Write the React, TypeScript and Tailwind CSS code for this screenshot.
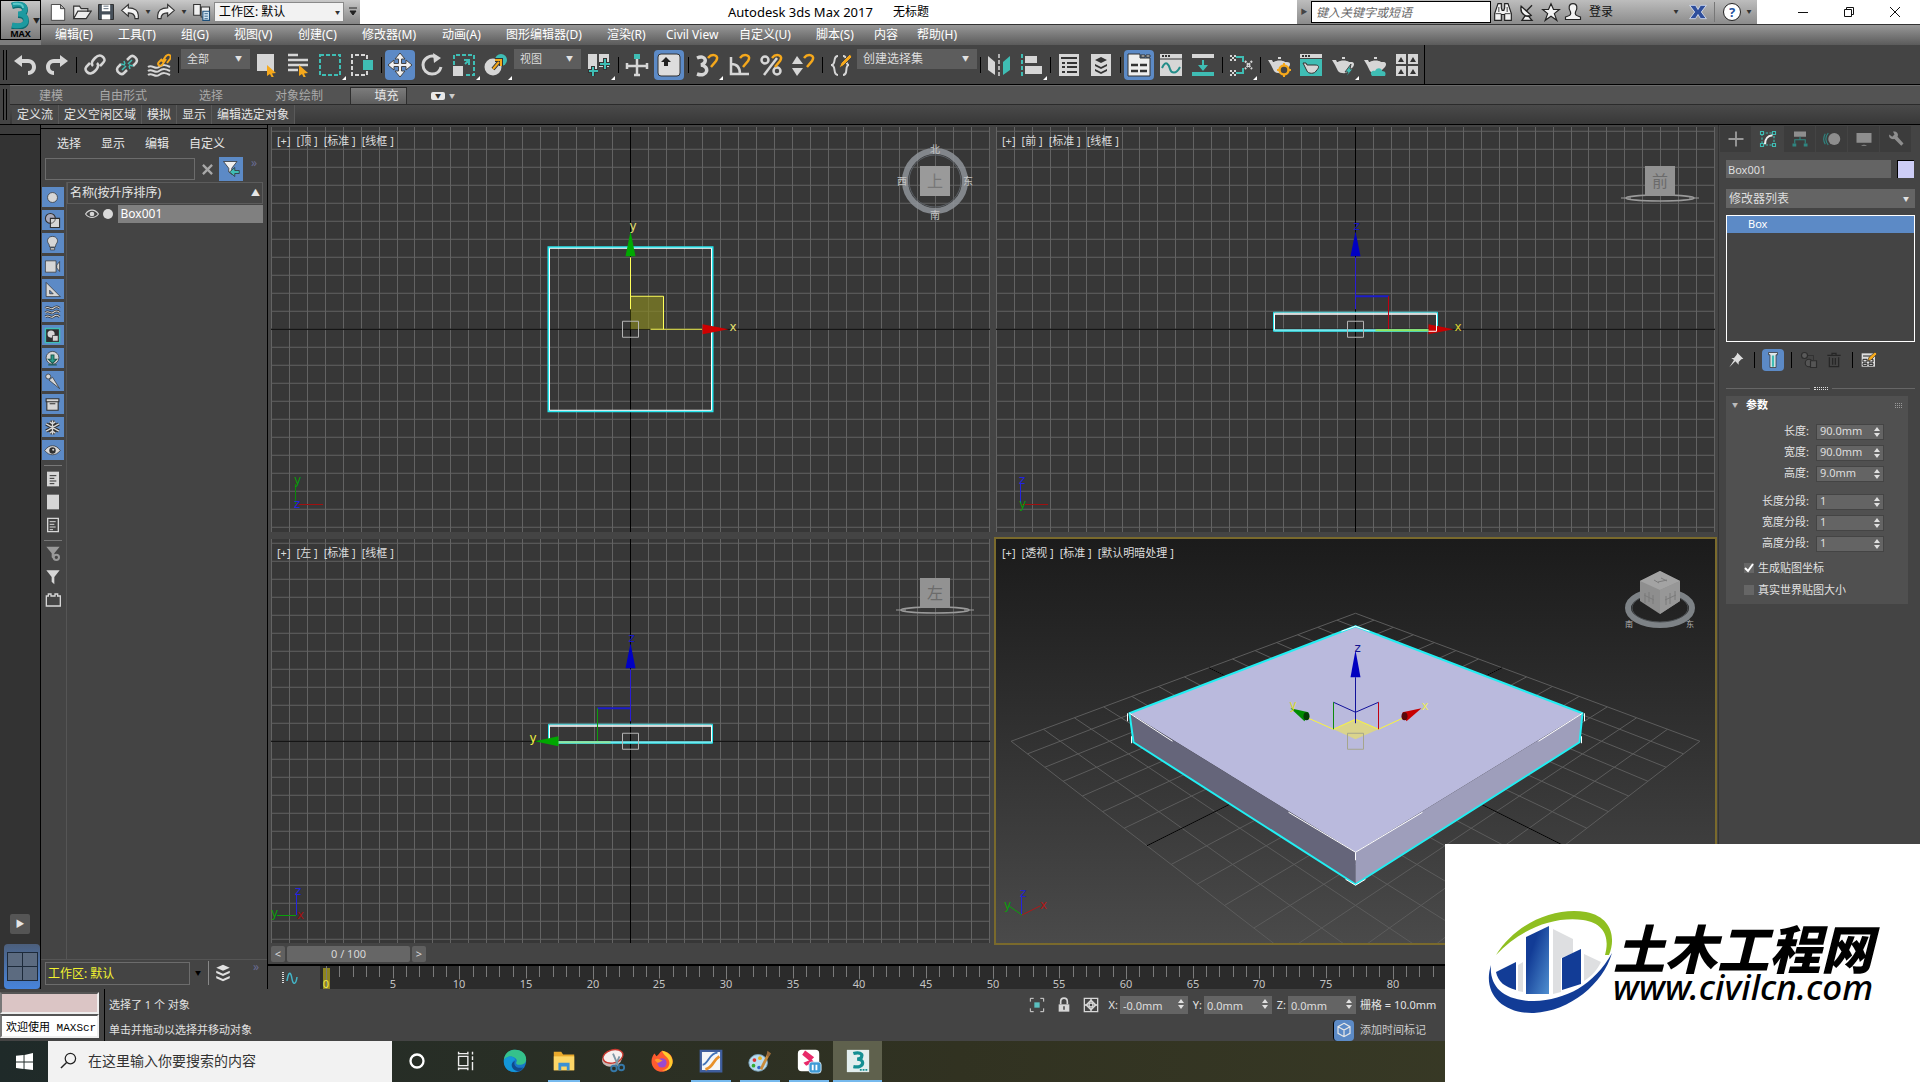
import React from 'react';
import clsx from 'clsx';

const FIELD = 'bg-[#646464] text-[#dedede] outline-none';

interface IconProps {
  children: React.ReactNode;
  className?: string;
}

function Icon({ children, className = 'w-6 h-6' }: IconProps) {
  return (
    <svg viewBox="0 0 24 24" fill="none" className={clsx('shrink-0', className)} aria-hidden="true">
      {children}
    </svg>
  );
}

const L = '#d6d6d6';
const T = '#3fbdb4';
const O = '#f5a81c';

const TEAPOT = 'M1 7h4l1 2h1c2-2 9-2 11 0h2c3 0 4 2 2 5l-4 4c-1 3-9 3-11 0L4 12zM11 6h3v-2h-3z';

/* ---------- Title bar ---------- */

const MENUS = [
  { label: '编辑(E)', width: 'w-[63px]' },
  { label: '工具(T)', width: 'w-[63px]' },
  { label: '组(G)', width: 'w-[53px]' },
  { label: '视图(V)', width: 'w-16' },
  { label: '创建(C)', width: 'w-16' },
  { label: '修改器(M)', width: 'w-20' },
  { label: '动画(A)', width: 'w-16' },
  { label: '图形编辑器(D)', width: 'w-[101px]' },
  { label: '渲染(R)', width: 'w-[59px]' },
  { label: 'Civil View', width: 'w-[73px]' },
  { label: '自定义(U)', width: 'w-[77px]' },
  { label: '脚本(S)', width: 'w-[58px]' },
  { label: '内容', width: 'w-[43px]' },
  { label: '帮助(H)', width: 'w-16' },
];

function Header() {
  return (
    <header className="flex bg-[#7d7d7d]">
      <button aria-label="应用程序" className="w-[41px] h-10 shrink-0 border border-black bg-linear-to-b from-[#c4c4c4] to-[#7c7c7c] flex flex-col items-center relative">
        <svg viewBox="0 0 24 28" className="w-6 h-7 mr-1" fill="none">
          <path d="M5 5c7-2 13-1 13 4 0 3-3 5-7 5 5 0 8 2 8 6 0 5-6 7-14 5" stroke="#0a6b70" strokeWidth="6" />
          <path d="M5 4c7-2 13-1 13 4 0 3-3 5-7 5 5 0 8 2 8 6 0 5-6 7-14 5" stroke="#1d9aa0" strokeWidth="5" />
          <path d="M6 3c6-1 10 0 10 4" stroke="#5cc8c8" strokeWidth="2" />
        </svg>
        <span className="text-[9px] leading-[9px] font-bold text-black">MAX</span>
        <span className="absolute right-0 top-4 text-[7px] leading-2 text-[#222]">▼</span>
      </button>
      <div className="flex-1 min-w-0">
        <div className="h-6 bg-white flex items-stretch">
          <div className="w-[319px] shrink-0 bg-linear-to-b from-[#c9c9c9] to-[#858585] flex items-center pl-[5px]">
            <button aria-label="新建" className="w-6 flex justify-center">
              <Icon className="w-5 h-5"><path d="M4 3h11l5 5v14H4z M15 3v5h5" fill="#fff" stroke="#333" /></Icon>
            </button>
            <button aria-label="打开" className="w-6 flex justify-center">
              <Icon className="w-5 h-5"><path d="M2 20V5h7l2 3h8v4M2 20l5-9h16l-6 9z" fill="#eee" stroke="#333" strokeWidth="1.4" /></Icon>
            </button>
            <button aria-label="保存" className="w-6 flex justify-center">
              <Icon className="w-5 h-5">
                <path d="M3 3h18v18H3z" fill="#46505a" stroke="#222" />
                <path d="M7 3h10v8H7zM7 15h10v6H7z" fill="#fff" />
                <path d="M9 5h6M9 8h6" stroke="#456" />
              </Icon>
            </button>
            <button aria-label="撤消" className="w-6 flex justify-center">
              <Icon className="w-5 h-5"><path d="M2 10l8-7v4c8 0 12 4 12 9v4h-4c0-5-3-7-8-7v4z" fill="#f4f4f4" stroke="#333" strokeWidth="1.4" /></Icon>
            </button>
            <span className="w-3 text-center text-[5px] text-[#333]">▼</span>
            <button aria-label="重做" className="w-6 flex justify-center">
              <Icon className="w-5 h-5"><path d="M22 10l-8-7v4c-8 0-12 4-12 9v4h4c0-5 3-7 8-7v4z" fill="#f4f4f4" stroke="#333" strokeWidth="1.4" /></Icon>
            </button>
            <span className="w-3 text-center text-[5px] text-[#333]">▼</span>
            <button aria-label="项目文件夹" className="w-6 flex justify-center">
              <Icon className="w-5 h-5">
                <path d="M2 3h8v13H2zM11 6h10v12H11z" fill="#f0f0f0" stroke="#333" strokeWidth="1.3" />
                <path d="M13 11h8v11h-8z" fill="#cfe3f0" stroke="#1d4f7a" strokeWidth="1.3" />
                <path d="M15 14h4M15 17h4M15 20h4" stroke="#1d4f7a" />
              </Icon>
            </button>
            <div className="relative">
              <select aria-label="工作区" className="block appearance-none w-[130px] h-5 bg-[#f2f2f2] text-black text-xs leading-4 pl-1 border border-[#8a8a8a]">
                <option>工作区: 默认</option>
              </select>
              <span className="absolute right-1 top-1.5 text-[5px] leading-2 text-[#333] pointer-events-none">▼</span>
            </div>
            <svg viewBox="0 0 10 10" className="w-2.5 h-2.5 ml-1"><path d="M1 1h8M2 4h6l-3 4z" stroke="#222" fill="#222" /></svg>
          </div>
          <h1 className="flex-1 flex items-center justify-center gap-5 text-[13px] leading-4 text-black">
            <span>Autodesk 3ds Max 2017</span>
            <span className="text-xs">无标题</span>
          </h1>
          <div className="w-[460px] shrink-0 bg-linear-to-b from-[#bdbdbd] to-[#8b8b8b] flex items-center">
            <span className="w-3.5 text-center text-[7px] text-[#444]">▶</span>
            <input aria-label="搜索帮助" placeholder="键入关键字或短语" className="w-[180px] h-[22px] bg-white border border-black px-1 text-xs italic placeholder:text-[#666]" />
            <div className="flex items-center">
              <button aria-label="搜索" className="w-6 flex justify-center">
                <Icon className="w-5 h-5"><path d="M6 2h4v5l1 3h2l1-3V2h4l4 12v8h-8v-7h-4v7H2v-8z" fill="#f3f3f3" stroke="#222" strokeWidth="1.4" /><path d="M3 14h7M14 14h7M7 6v6M17 6v6" stroke="#222" /></Icon>
              </button>
              <button aria-label="通信中心" className="w-6 flex justify-center">
                <Icon className="w-5 h-5"><path d="M5 5l12 11c-5 3-14-1-12-11zM11 11l7-7M10 16l-4 6h12l-5-6" fill="#f3f3f3" stroke="#222" strokeWidth="1.6" /></Icon>
              </button>
              <button aria-label="收藏夹" className="w-6 flex justify-center">
                <Icon className="w-5 h-5"><path d="M12 2l3 7h7l-6 5 3 8-7-5-7 5 3-8-6-5h7z" fill="#f3f3f3" stroke="#222" strokeWidth="1.4" /></Icon>
              </button>
              <button className="flex items-center text-xs text-[#111]">
                <Icon className="w-5 h-5 mr-1.5"><path d="M12 2c5 0 6 5 3 10-1 3 0 4 6 6v3H3v-3c6-2 7-3 6-6C6 7 7 2 12 2z" fill="#f3f3f3" stroke="#222" strokeWidth="1.4" /></Icon>
                登录
              </button>
            </div>
            <span className="ml-auto w-3 text-center text-[5px] text-[#333]">▼</span>
            <button aria-label="Exchange" className="w-8 flex justify-center">
              <Icon className="w-5 h-5">
                <path d="M2 4h7l3 5 3-5h7l-6 8 6 8h-7l-3-5-3 5H2l6-8z" fill="#2f4f9c" stroke="#dfe6f5" />
              </Icon>
            </button>
            <span className="w-px h-5 bg-[#777]" />
            <button aria-label="帮助" className="ml-2 w-[18px] h-[18px] rounded-full border border-[#222] bg-white text-[13px] leading-4 font-bold text-[#2453a0]">?</button>
            <span className="w-4 text-center text-[5px] text-[#333]">▼</span>
          </div>
          <div className="w-[163px] shrink-0 flex items-center justify-end pr-0.5 text-black">
            <button aria-label="最小化" className="w-[46px] flex justify-center"><svg viewBox="0 0 12 12" className="w-3 h-3"><path d="M1 6.5h10" stroke="#111" /></svg></button>
            <button aria-label="还原" className="w-[46px] flex justify-center"><svg viewBox="0 0 12 12" className="w-3 h-3" fill="none"><path d="M1.5 3.5h7v7h-7zM3.5 3V1.5h7v7H9" stroke="#111" /></svg></button>
            <button aria-label="关闭" className="w-[46px] flex justify-center"><svg viewBox="0 0 12 12" className="w-3 h-3"><path d="M1 1l10 10M11 1L1 11" stroke="#111" /></svg></button>
          </div>
        </div>
        <nav className="h-[21px] border-t border-[#333] bg-linear-to-b from-[#989898] to-[#5b5b5b] flex items-center pl-3.5 text-xs leading-5 text-white">
          {MENUS.map((m) => (
            <button key={m.label} className={clsx('text-left whitespace-nowrap', m.width)}>{m.label}</button>
          ))}
        </nav>
      </div>
    </header>
  );
}

/* ---------- Main toolbar ---------- */

interface ToolProps {
  label: string;
  active?: boolean;
  flyout?: boolean;
  children: React.ReactNode;
}

function Tool({ label, active, flyout, children }: ToolProps) {
  return (
    <button aria-label={label} className="w-8 h-[38px] shrink-0 flex items-center justify-center relative">
      <span className={clsx('w-[30px] h-[30px] rounded-sm flex items-center justify-center', active && 'bg-[#5c8ac6]')}>
        <Icon>{children}</Icon>
      </span>
      {flyout && (
        <svg viewBox="0 0 4 4" className="absolute right-0 bottom-1 w-1 h-1"><path d="M4 0v4H0z" fill="#fff" /></svg>
      )}
    </button>
  );
}

function Sep() {
  return (
    <span className="w-1.5 shrink-0 flex justify-center"><span className="w-px h-4 bg-black" /></span>
  );
}

function ToolSelect({ label, value, className }: { label: string; value: string; className: string }) {
  return (
    <span className={clsx('relative self-start mt-1 h-5 shrink-0', className)}>
      <select aria-label={label} className="block appearance-none w-full h-5 pl-1.5 leading-5 bg-[#5d5d5d] text-[#dcdcdc]">
        <option>{value}</option>
      </select>
      <span className="absolute right-2 top-1.5 text-[7px] leading-2 text-[#e2e2e2] pointer-events-none">▼</span>
    </span>
  );
}

const CURSOR = <path d="M13 12l9 8-4 .5 2 4-2 .5-2-4-3 2z" fill={O} />;
const MAGNET = <path d="M13 5c4-5 12-3 8 3l-5 6" stroke={O} strokeWidth="2.5" />;

function Toolbar() {
  return (
    <div className="h-10 bg-[#444] border-b border-black flex">
      <div className="flex items-center border-r border-black pr-px">
        <span className="w-[9px] h-[30px] flex gap-0.5 pl-[3px]"><i className="w-px bg-black" /><i className="w-px bg-black" /></span>
        <Tool label="撤消"><path d="M9 2L1 8l8 6v-4h6c3 0 4 2 4 4s-1 4-4 4v4c5 0 8-4 8-8s-3-8-8-8H9z" fill={L} /></Tool>
        <Tool label="重做"><path d="M15 2l8 6-8 6v-4H9c-3 0-4 2-4 4s1 4 4 4v4c-5 0-8-4-8-8s3-8 8-8h6z" fill={L} /></Tool>
        <Sep />
        <Tool label="链接"><path d="M10 13c-3-3 0-6 2-8s5-4 8-1 1 5-1 7l-2 2M14 10c3 3 0 6-2 8s-5 4-8 1-1-5 1-7l2-2" stroke={L} strokeWidth="2.5" /></Tool>
        <Tool label="取消链接">
          <path d="M12 7l3-3c3-3 9 2 6 6l-3 3M12 17l-3 3c-3 3-9-2-6-6l3-3" stroke={L} strokeWidth="2.5" />
          <path d="M17 7L13 11M11 13L7 17M9 8l1 3M6 11l4 1M15 16l-1-3M18 13l-4-1" stroke={T} strokeWidth="1.5" />
        </Tool>
        <Tool label="绑定到空间扭曲">
          <path d="M1 14c4-3 7 3 11 0s7-2 11 0M1 18c4-3 7 3 11 0s7-2 11 0M1 22c4-3 7 3 11 0s7-2 11 0" stroke={L} strokeWidth="2" />
          <path d="M15 9l4-6c3-3 6 0 4 3l-3 4M19 6l-4 6c-3 2-5-1-3-3l3-3" stroke={O} strokeWidth="2" />
        </Tool>
        <Sep />
        <ToolSelect label="选择过滤器" value="全部" className="w-[69px] text-[11px]" />
        <Tool label="选择对象"><path d="M3 1h17v17H3z" fill={L} />{CURSOR}</Tool>
        <Tool label="按名称选择"><path d="M2 2h10M2 7h20M2 12h20M2 17h10" stroke={L} strokeWidth="2.5" />{CURSOR}</Tool>
        <Tool label="矩形选择区域" flyout><path d="M2 2h20v20H2z" stroke={T} strokeWidth="2" strokeDasharray="4 2" /></Tool>
        <Tool label="窗口/交叉"><path d="M17 6V2H2v20h15v-4" stroke={L} strokeWidth="2" strokeDasharray="4 2" /><path d="M13 7h10v10H13z" fill={T} /></Tool>
        <Sep />
        <Tool label="选择并移动" active>
          <path d="M12 0l5 6h-3.500v4.500H18V7l6 5-6 5v-3.500h-4.500V18H17l-5 6-5-6h3.500v-4.500H6V17l-6-5 6-5v3.500h4.500V6H7z" fill="#f0f0f0" stroke="#444" />
        </Tool>
        <Tool label="选择并旋转"><path d="M16 4c-6-3-13 2-13 8 0 5 4 9 9 9s8-3 9-7" stroke={L} strokeWidth="3" /><path d="M13 0l8 5-7 5z" fill={L} /></Tool>
        <Tool label="选择并缩放" flyout>
          <path d="M2 12V2h20v20H13" stroke={T} strokeWidth="2" strokeDasharray="4 2" />
          <path d="M1 13h10v10H1z" fill={L} /><path d="M13 11l4-4M12 7h5v5" stroke={T} strokeWidth="2" />
        </Tool>
        <Tool label="选择并放置" flyout>
          <circle cx="17" cy="7" r="6" fill={T} /><circle cx="9" cy="14" r="8.500" fill={L} />
          <path d="M9 16l6-7M11 7h6v6" stroke="#333" strokeWidth="4" /><path d="M9 16l6-7M11 7h6v6" stroke={O} strokeWidth="2" />
        </Tool>
        <ToolSelect label="参考坐标系" value="视图" className="w-[67px] mx-0.5 text-[11px]" />
        <Tool label="使用轴点中心" flyout>
          <path d="M1 1h9v17H1zM12 1h10v13H12z" fill={L} /><path d="M6 13v10M1 18h10M18 5v12M12 11h11" stroke="#333" strokeWidth="4" /><path d="M6 14v9M2 18h9M18 6v10M13 11h10" stroke={T} strokeWidth="2" />
        </Tool>
        <Sep />
        <Tool label="选择并操纵"><path d="M12 5v18M1 13h22M2 10v6M22 10v6M9 22h6" stroke={L} strokeWidth="2.500" /><path d="M9 1h6v5H9z" fill={T} /></Tool>
        <Tool label="键盘快捷键覆盖" active><rect x="1" y="1" width="22" height="22" rx="3" fill="#ddd" stroke="#333" /><path d="M9 4l5 5h-3v4H7V9H4z" fill="#222" /></Tool>
        <Sep />
        <Tool label="捕捉开关" flyout>
          <path d="M2 5c9-4 11 5 4 7 9 1 7 13-4 9" stroke={L} strokeWidth="3.5" />{MAGNET}
        </Tool>
        <Tool label="角度捕捉切换"><path d="M4 4v17h18M4 11c6 0 9 4 9 10" stroke={L} strokeWidth="2.5" />{MAGNET}</Tool>
        <Tool label="百分比捕捉切换">
          <circle cx="6" cy="7" r="3.5" stroke={L} strokeWidth="2.5" /><circle cx="18" cy="18" r="3.5" stroke={L} strokeWidth="2.5" /><path d="M18 5L5 22" stroke={L} strokeWidth="2.5" />{MAGNET}
        </Tool>
        <Tool label="微调器捕捉切换"><path d="M1 11l5-8 6 8zM1 15h11l-6 8z" fill={L} />{MAGNET}</Tool>
        <Sep />
        <Tool label="编辑命名选择集"><path d="M9 3C3 3 8 12 2 12c6 0 1 10 7 10M14 3c6 0 1 9 6 9-5 0 0 10-6 10" stroke={L} strokeWidth="2" /><path d="M10 15l2-5 9-9 2 3-9 9z" fill={O} stroke="#444" /></Tool>
        <ToolSelect label="命名选择集" value="创建选择集" className="w-[120px] text-xs" />
        <Sep />
        <Tool label="镜像"><path d="M1 3l7 6v13l-7-5z" fill={L} /><path d="M12 1v22" stroke={L} strokeWidth="1.5" strokeDasharray="4 2" /><path d="M23 3l-7 6v13l7-5z" fill={T} /></Tool>
        <Tool label="对齐" flyout><path d="M3 1v22" stroke={T} strokeWidth="2" strokeDasharray="4 2" /><path d="M6 3h12v7H6zM6 13h17v8H6z" fill={L} /></Tool>
        <Sep />
        <Tool label="场景资源管理器"><path d="M2 1h20v22H2z" fill={L} /><path d="M4 5h16M5 10h3M10 10h10M5 14h3M10 14h10M5 19h3M10 19h10" stroke="#333" strokeWidth="2" /></Tool>
        <Tool label="层资源管理器"><path d="M2 1h20v22H2z" fill={L} /><path d="M12 4l6 3-6 3-6-3zM6 11l6 3 6-3v2l-6 3-6-3zM6 16l6 3 6-3v2l-6 3-6-3z" fill="#333" /></Tool>
        <Sep />
        <Tool label="显示功能区" active><path d="M1 1h12v4h10v18H1z" fill="#eee" stroke="#333" /><path d="M14 2h4v2h-4zM19 2h4v2h-4z" fill="#eee" stroke="#333" /><path d="M4 12h7M13 12h7M4 18h7M13 18h7" stroke="#333" strokeWidth="2.5" /></Tool>
        <Tool label="曲线编辑器"><path d="M1 1h22v22H1z" fill={L} /><path d="M1 6h22" stroke="#333" /><path d="M3 3h8" stroke="#333" strokeWidth="2" strokeDasharray="2 1" /><path d="M3 15c4-9 7-3 8 1s6 6 10-2" stroke="#228c88" strokeWidth="2" /></Tool>
        <Tool label="图解视图"><path d="M1 1h22v4H1z" fill={L} /><path d="M1 19h22v4H1z" fill={T} /><path d="M11 7h2v5h4l-5 6-5-6h4z" fill={T} /></Tool>
        <Sep />
        <Tool label="材质编辑器" flyout>
          <path d="M7 4h7v5M7 20h7v-5" stroke={T} strokeWidth="2" />
          <path d="M1 2h2v2H1zM5 2h2v2H5zM3 4h2v2H3zM1 6h2v2H1zM5 6h2v2H5zM1 17h2v2H1zM5 17h2v2H5zM3 19h2v2H3zM1 21h2v2H1zM5 21h2v2H5z" fill={L} />
          <path d="M16 8l7 8M23 8l-7 8" stroke={L} strokeWidth="2" strokeDasharray="2 1" />
        </Tool>
        <Sep />
        <Tool label="渲染设置"><path d={TEAPOT} fill={L} /><circle cx="17" cy="17" r="4.5" stroke={O} strokeWidth="2.5" fill="#444" /><path d="M17 10v3M17 21v3M10 17h3M21 17h3" stroke={O} strokeWidth="2" /></Tool>
        <Tool label="渲染帧窗口"><path d="M1 1h22v4H1z" fill={L} /><path d="M1 6h22v17H1z" fill={T} /><path d="M4 10h3l1 2h8c4 0 5 2 1 6-1 3-8 3-9 0z" fill={L} stroke="#333" /><path d="M3 3h9" stroke="#333" strokeWidth="2" strokeDasharray="2 1" /></Tool>
        <Tool label="渲染产品" flyout><path d={TEAPOT} fill={L} /><path d="M20 11l-6 8h3l-2 5 7-8h-3z" fill={T} stroke="#444" /></Tool>
        <Tool label="在云中渲染"><path d={TEAPOT} fill={L} /><path d="M9 23c-3-4 1-6 3-5 2-4 7-3 7 0 4 0 4 3 3 5z" fill={T} /></Tool>
        <Tool label="渲染库"><path d="M1 1h10v10H1zM13 1h10v10H13zM1 13h10v10H1zM13 13h10v10H13z" fill={L} /><path d="M3 9l3-5 3 5zM15 9l3-5 3 5zM3 21l3-5 3 5zM15 21l3-5 3 5z" fill="#333" /></Tool>
      </div>
    </div>
  );
}

/* ---------- Ribbon ---------- */

const PANELS = ['定义流', '定义空闲区域', '模拟', '显示', '编辑选定对象'];

function Ribbon() {
  return (
    <div className="flex bg-[#444] text-xs">
      <span className="w-2.5 shrink-0 flex gap-0.5 pl-[3px] py-1"><i className="w-px bg-black" /><i className="w-px bg-black" /></span>
      <div className="flex-1">
        <div className="h-[19px] bg-[#535353] border-t border-[#6a6a6a] flex items-end text-[#a9a9a9] leading-4">
          <button className="w-[82px]">建模</button>
          <button className="w-[62px]">自由形式</button>
          <button className="w-[114px]">选择</button>
          <button className="w-[62px]">对象绘制</button>
          <button className="ml-5 w-[57px] h-[17px] pl-4 border border-b-0 border-[#2d2d2d] bg-linear-to-b from-[#7c7c7c] to-[#5e5e5e] text-[#e6e6e6]">填充</button>
          <button aria-label="功能区选项" className="ml-6 mb-1 flex items-center gap-1 text-[6px] leading-2 text-[#ccc]">
            <span className="w-3.5 h-2 rounded-xs bg-[#e8e8e8] text-[#333]">▼</span>▼
          </button>
        </div>
        <div className="h-5 border-t border-[#2b2b2b] bg-linear-to-b from-[#4a4a4a] to-[#383838] flex pl-0.5 text-[#e4e4e4] leading-[18px]">
          {PANELS.map((p) => (
            <button key={p} className="px-[5px] border-r border-[#5a5a5a] bg-[#484848] whitespace-nowrap">{p}</button>
          ))}
        </div>
      </div>
    </div>
  );
}

/* ---------- Scene explorer ---------- */

const D = '#2f2f2f';

const FILTERS = [
  { name: '几何体', icon: <circle cx="12" cy="12" r="7" fill={L} stroke={D} /> },
  { name: '图形', icon: <><circle cx="9" cy="9" r="7" fill="#aab" stroke={D} strokeWidth="1.5" /><path d="M9 9h13v13H9z" fill={L} stroke={D} strokeWidth="1.5" /><path d="M9 16c4 0 7-3 7-7" stroke={D} /></> },
  { name: '灯光', icon: <path d="M12 2c7 0 9 7 5 11l-1 4H8l-1-4C3 9 5 2 12 2zM9 18h6v3H9z" fill={L} stroke={D} /> },
  { name: '摄影机', icon: <path d="M2 4h15v16H2zM18 10l4-5v14l-4-5z" fill={L} stroke={D} /> },
  { name: '辅助对象', icon: <><path d="M3 2l20 20H3z" fill={L} stroke={D} /><path d="M8 13l5 5H8z" fill="#5c8ac6" stroke={D} /></> },
  { name: '空间扭曲', icon: <><path d="M2 6c5-4 7 3 11 0s6-3 9 0M2 12c5-4 7 3 11 0s6-3 9 0M2 18c5-4 7 3 11 0s6-3 9 0" stroke={D} strokeWidth="3.5" /><path d="M2 6c5-4 7 3 11 0s6-3 9 0M2 12c5-4 7 3 11 0s6-3 9 0M2 18c5-4 7 3 11 0s6-3 9 0" stroke={L} strokeWidth="1.5" /></> },
  { name: '组', icon: <><path d="M2 2h20v20H2z" fill={D} stroke={T} strokeWidth="2" /><circle cx="10" cy="10" r="5" fill={L} /><path d="M12 12h8v8h-8z" fill={L} stroke={D} /></> },
  { name: '外部参照', icon: <><circle cx="12" cy="11" r="9" fill={L} stroke={D} /><path d="M10 7h4v6h4l-6 6-6-6h4zM6 21h12" fill="#2a9c8c" stroke="#1d5a50" strokeWidth="1.5" /></> },
  { name: '骨骼', icon: <><circle cx="6" cy="5" r="3.5" fill={L} stroke={D} /><path d="M7 10l5-4 10 16z" fill={L} stroke={D} /></> },
  { name: '容器', icon: <path d="M3 4h18v4H3zM4 8h16v12H4zM8 11h8" fill={L} stroke={D} strokeWidth="1.5" /> },
  { name: '冻结', icon: <><path d="M12 2v20M3 7l18 10M21 7L3 17M8 4l4 3 4-3M8 20l4-3 4 3" stroke={D} strokeWidth="5" /><path d="M12 2v20M3 7l18 10M21 7L3 17M8 4l4 3 4-3M8 20l4-3 4 3" stroke={L} strokeWidth="2" /></> },
  { name: '隐藏', icon: <><path d="M1 12c6-9 16-9 22 0-6 8-16 8-22 0z" fill={L} stroke={D} /><circle cx="12" cy="12" r="4.5" fill={D} /><circle cx="13" cy="11" r="1.5" fill={L} /></> },
];

function SceneExplorer() {
  return (
    <aside className="w-[228px] shrink-0 bg-[#444] border-x border-black flex flex-col text-[#e6e6e6] text-xs">
      <div className="h-1 border-b border-black" />
      <div className="h-[27px] pt-0.5 flex items-center gap-5 pl-4 text-xs">
        <button>选择</button><button>显示</button><button>编辑</button><button>自定义</button>
      </div>
      <div className="h-[26px] flex items-center pl-1">
        <input aria-label="查找" className="w-[150px] h-[22px] border border-[#6c6c6c] bg-transparent" />
        <button aria-label="清除" className="w-6 flex justify-center">
          <svg viewBox="0 0 12 12" className="w-[11px] h-[11px]"><path d="M1 1l10 10M11 1L1 11" stroke="#a8a8a8" strokeWidth="2.500" /></svg>
        </button>
        <button aria-label="选择过滤器" className="w-6 h-6 bg-[#5c8ac6] flex items-center justify-center">
          <Icon className="w-[18px] h-[18px]"><path d="M2 2h18l-7 9v8l-4-3v-5z" fill="#f0f0f0" stroke={D} /><path d="M23 14h-6v-4l-7 6 7 6v-4h6z" fill={T} stroke={D} /></Icon>
        </button>
        <span className="ml-2 mb-3 text-[#686b92]">»</span>
      </div>
      <div className="flex-1 min-h-0 flex">
        <div className="w-[25px] pt-[5px] pr-0.5 shrink-0 flex flex-col items-center">
          <div className="flex flex-col gap-[3px]">
            {FILTERS.map((f) => (
              <button key={f.name} aria-label={f.name} className="w-[22px] h-5 bg-[#5c8ac6] flex items-center justify-center">
                <Icon className="w-[17px] h-[17px]">{f.icon}</Icon>
              </button>
            ))}
          </div>
          <hr className="w-[18px] mt-[5px] mb-[3px] border-[#777]" />
          <div className="flex flex-col gap-[3px]">
            <button aria-label="全部显示" className="h-5 flex items-center"><Icon className="w-4 h-4"><path d="M3 1h18v22H3z" fill={L} /><path d="M7 7h10M7 11h7M7 15h10M7 19h7" stroke={D} strokeWidth="1.5" /></Icon></button>
            <button aria-label="不显示" className="h-5 flex items-center"><Icon className="w-4 h-4"><path d="M3 1h18v22H3z" fill={L} /></Icon></button>
            <button aria-label="反转显示" className="h-5 flex items-center"><Icon className="w-4 h-4"><path d="M4 2h16v20H4z" stroke={L} strokeWidth="2" /><path d="M7 7h9M7 11h7M7 15h9M7 19h5" stroke={L} strokeWidth="1.5" /></Icon></button>
          </div>
          <hr className="w-[18px] mt-[5px] mb-[3px] border-[#777]" />
          <div className="flex flex-col gap-[3px]">
            <button aria-label="过滤器设置" className="h-5 flex items-center"><Icon className="w-4 h-4"><path d="M2 1h20l-8 10v10l-4-4v-6z" fill="#999" /><circle cx="17" cy="17" r="4" stroke="#999" strokeWidth="3" fill="#444" /></Icon></button>
            <button aria-label="过滤器" className="h-5 flex items-center"><Icon className="w-4 h-4"><path d="M2 2h20l-8 10v11l-4-4v-7z" fill={L} /></Icon></button>
            <button aria-label="构件" className="h-5 flex items-center"><Icon className="w-4 h-4"><path d="M2 6h3V3h4v3h6V3h4v3h4v15H2z" stroke={L} strokeWidth="2" /></Icon></button>
          </div>
        </div>
        <div className="flex-1 border-l border-[#555] pr-1">
          <table className="w-full border-collapse">
            <thead>
              <tr className="h-[21px] border border-[#5c5c5c]">
                <th className="pl-0.5 text-left font-normal" colSpan={2}>
                  <div className="flex justify-between items-center pr-0.5"><span>名称(按升序排序)</span><span className="text-[9px]">▲</span></div>
                </th>
              </tr>
            </thead>
            <tbody>
              <tr className="h-5">
                <td className="w-[50px] p-0">
                  <div className="flex items-center justify-end gap-1 pr-[5px]">
                    <Icon className="w-3.5 h-3.5"><path d="M1 12c6-9 16-9 22 0-6 8-16 8-22 0z" stroke={L} strokeWidth="2" /><circle cx="12" cy="12" r="4" fill={L} /></Icon>
                    <span className="w-2.5 h-2.5 rounded-full bg-[#d9d9d9]" />
                  </div>
                </td>
                <td className="p-0"><div className="h-[18px] pl-[3px] leading-[18px] bg-[#808080] text-white">Box001</div></td>
              </tr>
            </tbody>
          </table>
        </div>
      </div>
      <div className="h-[30px] pb-[3px] border-t border-[#555] flex items-center pl-1">
        <input aria-label="工作区" defaultValue="工作区: 默认" className="w-[145px] h-[23px] px-0.5 border border-[#6c6c6c] bg-transparent text-[#f2f230]" />
        <span className="w-4 text-center text-[6px] text-black">▼</span>
        <span className="w-px h-6 bg-[#888] ml-0.5" />
        <button aria-label="图层" className="w-7 flex justify-center">
          <Icon className="w-[18px] h-[18px]"><path d="M12 1l9 4-9 4-9-4zM3 9l9 4 9-4v3l-9 4-9-4zM3 16l9 4 9-4v3l-9 4-9-4z" fill="#e2e2e2" /></Icon>
        </button>
        <span className="ml-auto pr-2 mb-3 text-[#686b92]">»</span>
      </div>
    </aside>
  );
}

/* ---------- Viewports ---------- */

const STEPS = Array.from({ length: 61 }, (_, i) => i - 30);

function Grid() {
  return (
    <g stroke="#636363">
      {STEPS.map((i) => {
        const p = Math.round(i * 17.96);
        return <path key={i} d={`M${p} -540V540M-540 ${p}H540`} />;
      })}
      <path d="M0 -900V900M-900 0H900" stroke="#000" />
    </g>
  );
}

function AxisText({ x, y, fill, children }: { x: number; y: number; fill: string; children: string }) {
  return <text x={x} y={y} fill={fill} stroke="none" fontSize="12" className="font-['DejaVu_Sans']">{children}</text>;
}

function ViewCube({ face }: { face: 'top' | 'flat' | 'iso' }) {
  return (
    <svg viewBox="-44 -44 88 88" className="absolute right-[11px] top-2.5 w-[88px] h-[88px]" fill="none">
      {face === 'top' && (
        <>
          <circle r="30" stroke="#8f949a" strokeWidth="6" opacity="0.85" />
          <circle r="26" stroke="#5b6066" />
          <path d="M-15 -15h30v30h-30z" fill="#9a9a9a" />
          <g className="font-['Noto_Sans_CJK_SC']" fill="#c4c4c4" fontSize="10" textAnchor="middle">
            <text y="-28">北</text><text y="38">南</text><text x="-33" y="4">西</text><text x="33" y="4">东</text>
            <text y="6" fill="#777" fontSize="16">上</text>
          </g>
        </>
      )}
      {face === 'flat' && (
        <>
          <ellipse cy="17" rx="34" ry="3" stroke="#9a9a9a" strokeWidth="1.500" />
          <path d="M-15 -15h30v30h-30z" fill="#929292" />
          <path d="M-39 17h10M29 17h10" stroke="#9a9a9a" />
        </>
      )}
      {face === 'iso' && (
        <>
          <ellipse cy="15" rx="32" ry="17" stroke="#7d8286" strokeWidth="6" />
          <ellipse cy="15" rx="28" ry="14" stroke="#4b4f52" />
          <path d="M0 -22L20 -12V8L0 21L-20 8V-12z" fill="#8e8e8e" />
          <path d="M0 -22L20 -12L0 -3L-20 -12z" fill="#a3a3a3" />
          <path d="M0 -3V21L20 8V-12z" fill="#979797" />
          <path d="M-15 0v10M-11 -1v10M-7 2v9M-16 2l10 5M6 3v9M10 0v11M15 -2v9M5 7l11-5M-6 -13l5 3M1 -15l6 3M-2 -11l9-2" stroke="#7b7b7b" />
          <g className="font-['Noto_Sans_CJK_SC']" fill="#b5b5b5" fontSize="8"><text x="-35" y="34">南</text><text x="26" y="34">东</text></g>
        </>
      )}
    </svg>
  );
}

interface ViewportProps {
  labels: string[];
  face: 'top' | 'flat' | 'iso';
  cubeText?: string;
  active?: boolean;
  tripod: React.ReactNode;
  children: React.ReactNode;
}

function Viewport({ labels, face, cubeText, active, tripod, children }: ViewportProps) {
  return (
    <section
      className={clsx(
        'relative overflow-hidden min-w-0 min-h-0',
        active ? 'bg-linear-to-b from-[#1b1b1b] to-[#4a4a4a] outline-2 outline-[#7a6a2c]' : 'bg-[#373737]',
      )}
    >
      <svg className="w-full h-full block" fill="none">
        <svg x="50%" y="50%" className="overflow-visible">{children}</svg>
      </svg>
      <div className="absolute left-1.5 top-1.5 flex gap-1.5 text-[11px] leading-4 text-[#dcdcdc] whitespace-pre">
        {labels.map((l) => (
          <button key={l}>{l}</button>
        ))}
      </div>
      <ViewCube face={face} />
      {cubeText && <span className="absolute right-[45px] top-11 w-5 text-center text-[16px] leading-5 text-[#6b6b6b]">{cubeText}</span>}
      <svg viewBox="-26 -32 60 44" className="absolute left-0 bottom-4 w-[60px] h-11" fill="none">{tripod}</svg>
    </section>
  );
}

function Pivot() {
  return <path d="M-8 -8h16v16h-16z" stroke="#b4b4b4" />;
}

function TopView() {
  return (
    <>
      <Grid />
      <path d="M-82 -82h164v164h-164z" stroke="#27e6ee" strokeWidth="2" />
      <path d="M-81 -81h162v162h-162z" stroke="#fff" />
      <path d="M0 -33h33v33h-33z" fill="#8a8a20" fillOpacity="0.65" />
      <path d="M0 -20V-72M0 -33H33V0M20 0H72" stroke="#ffff5a" />
      <path d="M0 -98L5 -73H-5z" fill="#00a800" />
      <path d="M98 0L72 5V-5z" fill="#d00000" />
      <Pivot />
      <AxisText x={-1} y={-99} fill="#e6e070">y</AxisText>
      <AxisText x={99} y={2} fill="#e6e070">x</AxisText>
    </>
  );
}

function FlatBox() {
  return (
    <>
      <path d="M-82 -17h164v19h-164z" stroke="#27e6ee" />
      <path d="M-81 -16h162v17h-162z" stroke="#fff" />
      <path d="M-81 -15h162" stroke="#fff" />
      <path d="M-81 1h162" stroke="#6feaf0" strokeWidth="2" />
    </>
  );
}

function UpArrow() {
  return (
    <>
      <path d="M0 -20V-72" stroke="#2a1cd8" />
      <path d="M0 -98L5 -73H-5z" fill="#0000c4" />
      <AxisText x={-2} y={-99} fill="#1818c8">z</AxisText>
    </>
  );
}

function FrontView() {
  return (
    <>
      <Grid />
      <FlatBox />
      <path d="M0 -33H33" stroke="#1c1cc8" strokeWidth="2" />
      <path d="M33 -33V0" stroke="#c00010" />
      <path d="M20 1H73" stroke="#8fe860" strokeWidth="2" />
      <path d="M98 0L73 5V-5z" fill="#c80000" />
      <path d="M81 -5V2H73" stroke="#fff" />
      <UpArrow />
      <Pivot />
      <AxisText x={99} y={2} fill="#d8d030">x</AxisText>
    </>
  );
}

function LeftView() {
  return (
    <>
      <Grid />
      <FlatBox />
      <path d="M0 -33H-33" stroke="#1c1cc8" strokeWidth="2" />
      <path d="M-33 -33V0" stroke="#0c9a0c" />
      <path d="M-20 1H-73" stroke="#8fe8a0" strokeWidth="2" />
      <path d="M-96 0L-72 5V-5z" fill="#00a800" />
      <UpArrow />
      <Pivot />
      <AxisText x={-101} y={1} fill="#f0f040">y</AxisText>
    </>
  );
}

// ground plane to screen, u runs to the lower right and v to the lower left
function project(u: number, v: number) {
  const q = u + v;
  const k = 1 - 0.0249 * q;
  return `${((24.6 * (u - v)) / k).toFixed(1)} ${((12.33 * q) / k).toFixed(1)}`;
}

const GROUND = Array.from({ length: 15 }, (_, i) => i - 7);

function PerspectiveView() {
  return (
    <>
      <g stroke="#5c5c5c">
        {GROUND.map((i) => (
          <path key={i} d={`M${project(i, -7)}L${project(i, 7)}M${project(-7, i)}L${project(7, i)}`} />
        ))}
        <path d={`M${project(0, -7)}L${project(0, 7)}M${project(-7, 0)}L${project(7, 0)}`} stroke="#000" />
      </g>
      <path d="M0 -115L227 -28L0 111L-226 -28z" fill="#babadd" />
      <path d="M-226 -28L0 111V143L-222 1z" fill="#65657a" />
      <path d="M227 -28L0 111V143L224 1z" fill="#9e9ebb" />
      <path d="M0 -115L227 -28L224 1L0 143L-222 1L-226 -28z" stroke="#22eef2" strokeWidth="2" strokeLinejoin="round" />
      <path d="M-226 -28L-183 0M-67 71L0 111L67 71M0 111V119M227 -28L183 0M-14 -110L0 -115L14 -110M-228 -20V-28M229 -20V-28M-224 -5V2M226 -5V2M-10 138L0 144L10 138" stroke="#fff" />
      <path d="M0 -22L23 -12L0 -2L-22 -12z" fill="#e4dc70" fillOpacity="0.75" />
      <path d="M-47 -23L-22 -12L0 -22L23 -12L47 -23" stroke="#fbf53c" />
      <path d="M0 -18V-64M-22 -39L0 -29L23 -39" stroke="#12129a" />
      <path d="M-22 -39V-12" stroke="#0c8a0c" />
      <path d="M23 -39V-12" stroke="#c00010" />
      <path d="M0 -91L5 -64H-5z" fill="#0000c0" />
      <path d="M-65 -33L-47 -29L-51 -20z" fill="#008c00" />
      <ellipse cx="-49" cy="-25" rx="3" ry="4" fill="#063c06" />
      <path d="M66 -33L47 -29L51 -20z" fill="#c80000" />
      <ellipse cx="49" cy="-25" rx="3" ry="4" fill="#5a0808" />
      <path d="M-8 -8h16v16h-16z" stroke="#a5a58c" />
      <AxisText x={-1} y={-89} fill="#101090">z</AxisText>
      <AxisText x={-66} y={-32} fill="#d8d830">y</AxisText>
      <AxisText x={66} y={-31} fill="#e8e860">x</AxisText>
    </>
  );
}

const TICKS = Array.from({ length: 90 }, (_, i) => i);

function Timeline() {
  return (
    <div className="h-[25px] flex border-t-2 border-black">
      <button aria-label="打开迷你曲线编辑器" className="w-[52px] pr-2 flex items-center justify-center">
        <svg viewBox="0 0 16 14" className="w-4 h-3.5" fill="none"><path d="M1 1v12" stroke="#ddd" strokeWidth="2" strokeDasharray="1 1" /><path d="M5 10c2-12 4-8 5-2s4 6 5-2" stroke="#43b5c8" strokeWidth="1.5" /></svg>
      </button>
      <svg className="flex-1 h-[23px] bg-[#2b2b2b] overflow-visible" fill="none">
        <path d="M3 2h7v21H3z" fill="#8f861f" />
        {TICKS.map((i) => {
          const x = Math.round((i * 40) / 3) + 6;
          return <path key={i} d={`M${x}.5 0V${i % 5 ? 11 : 23}`} stroke="#7a7a7a" />;
        })}
        {TICKS.filter((i) => i % 5 === 0).map((i) => (
          <text key={i} x={Math.round((i * 40) / 3) + 6} y="22" textAnchor="middle" fontSize="11" fill={i ? '#c4c4c4' : '#f0e84a'} stroke="#2b2b2b" strokeWidth={i ? 3 : 0} paintOrder="stroke">{i}</text>
        ))}
      </svg>
    </div>
  );
}

function Workspace() {
  return (
    <main className="flex-1 min-w-0 bg-[#444] flex flex-col">
      <div className="flex-1 min-h-0 grid grid-cols-2 grid-rows-2 gap-x-1.5 gap-y-[7px] px-[3px] pt-0.5 pb-[3px]">
        <Viewport
          labels={['[+]', '[顶 ]', '[标准 ]', '[线框 ]']}
          face="top"
          tripod={
            <>
              <path d="M-1.5 0V-20" stroke="#0a8a0a" /><path d="M0 0.5H26" stroke="#a01010" />
              <AxisText x={-3} y={-20} fill="#0a9a0a">y</AxisText><AxisText x={-3} y={4} fill="#2424e0">z</AxisText>
            </>
          }
        >
          <TopView />
        </Viewport>
        <Viewport
          labels={['[+]', '[前 ]', '[标准 ]', '[线框 ]']}
          face="flat"
          cubeText="前"
          tripod={
            <>
              <path d="M-1.5 0V-20" stroke="#2424e0" /><path d="M0 0.5H26" stroke="#a01010" />
              <AxisText x={-3} y={-20} fill="#2424e0">z</AxisText><AxisText x={-3} y={4} fill="#0a9a0a">y</AxisText>
            </>
          }
        >
          <FrontView />
        </Viewport>
        <Viewport
          labels={['[+]', '[左 ]', '[标准 ]', '[线框 ]']}
          face="flat"
          cubeText="左"
          tripod={
            <>
              <path d="M-0.5 0V-20" stroke="#2424e0" /><path d="M-1 0.5H-20" stroke="#0aa00a" />
              <AxisText x={-2} y={-20} fill="#2424e0">z</AxisText><AxisText x={-26} y={2} fill="#0aa00a">y</AxisText><AxisText x={0} y={4} fill="#a01010">x</AxisText>
            </>
          }
        >
          <LeftView />
        </Viewport>
        <Viewport
          active
          labels={['[+]', '[透视 ]', '[标准 ]', '[默认明暗处理 ]']}
          face="iso"
          tripod={
            <>
              <path d="M-0.5 0V-21" stroke="#2424e0" /><path d="M0 0L-13 -9" stroke="#0aa00a" /><path d="M0 0L18 -9" stroke="#b01818" />
              <AxisText x={-2} y={-18} fill="#2424c8">z</AxisText><AxisText x={-18} y={-6} fill="#0aa00a">y</AxisText><AxisText x={18} y={-6} fill="#b01818">x</AxisText>
            </>
          }
        >
          <PerspectiveView />
        </Viewport>
      </div>
      <div className="h-[18px] flex items-start gap-0.5 pl-[3px] text-[11px] leading-4 text-[#d8d8d8]">
        <button className="w-3.5 h-4 rounded-xs bg-[#606060]">&lt;</button>
        <button className="w-[123px] h-4 rounded-xs bg-[#666]">0 / 100</button>
        <button className="w-3.5 h-4 rounded-xs bg-[#606060]">&gt;</button>
      </div>
      <Timeline />
    </main>
  );
}

/* ---------- Command panel ---------- */

function Spinner() {
  return <svg viewBox="0 0 6 10" className="absolute right-1 top-[3px] w-1.5 h-2.5"><path d="M0 4l3-4 3 4zM0 6h6l-3 4z" fill="#e0e0e0" /></svg>;
}

function Param({ id, label, value }: { id: string; label: string; value: string }) {
  return (
    <div className="flex items-center h-[21px]">
      <label htmlFor={id} className="w-[83px] text-right">{label}:</label>
      <span className="relative ml-[7px] w-[68px]">
        <input id={id} defaultValue={value} className={clsx(FIELD, 'block w-full h-4 px-[3px] text-[11px] border border-[#444]')} />
        <Spinner />
      </span>
    </div>
  );
}

const TABS = [
  { name: '创建', icon: <path d="M12 2v20M2 12h20" stroke="#9a9a9a" strokeWidth="2.5" /> },
  { name: '修改', icon: <><path d="M4 4h16v16H4z" stroke={T} strokeWidth="1.5" strokeDasharray="3 2" /><path d="M2 2h4v4H2zM18 2h4v4h-4zM2 18h4v4H2zM18 18h4v4h-4z" fill="#444" stroke={T} strokeWidth="1.5" /><path d="M8 19c0-8 3-11 10-12" stroke="#eee" strokeWidth="3" /></> },
  { name: '层次', icon: <><path d="M4 2h16v7H4z" fill="#8e8e8e" /><path d="M12 9v4M5 18v-5h14v5" stroke="#2f8580" strokeWidth="1.5" /><path d="M2 18h5v4H2zM17 18h5v4h-5z" fill="#2f8580" /></> },
  { name: '运动', icon: <><circle cx="15" cy="12" r="8" fill="#8e8e8e" /><path d="M7 4c-4 5-4 11 0 16M3 5c-3 5-3 9 0 14" stroke="#2f8580" strokeWidth="1.5" /></> },
  { name: '显示', icon: <path d="M2 4h20v13H2zM8 21c2-2 6-2 8 0z" fill="#8e8e8e" /> },
  { name: '实用程序', icon: <path d="M3 6l4 3 3-3-2-4c5-1 8 3 6 7l8 9-3 3-9-9C5 13 2 10 3 6z" fill="#8e8e8e" /> },
];

const MAPPING = [
  { label: '生成贴图坐标', checked: true },
  { label: '真实世界贴图大小', checked: false },
];

function CommandPanel() {
  return (
    <aside className="w-[202px] shrink-0 bg-[#444] border-l border-[#333] text-[11px] text-[#e2e2e2]">
      <div className="pt-px pl-px flex gap-px">
        {TABS.map((t) => (
          <button key={t.name} aria-label={t.name} className={clsx('w-[31px] h-[26px] flex items-center justify-center', t.name !== '修改' && 'bg-[#3c3c3c]')}>
            <Icon className="w-[18px] h-[18px]">{t.icon}</Icon>
          </button>
        ))}
      </div>
      <div className="pt-2 pl-[7px] pr-[5px]">
        <div className="flex gap-1.5">
          <input aria-label="名称" defaultValue="Box001" className={clsx(FIELD, 'w-[165px] h-[18px] px-0.5')} />
          <button aria-label="对象颜色" className="w-[17px] h-[18px] bg-[#cdcdf6] border-l border-t border-black" />
        </div>
        <div className="relative mt-[11px]">
          <select aria-label="修改器列表" className={clsx(FIELD, 'block appearance-none w-full h-[19px] pl-[3px] text-xs leading-4')}>
            <option>修改器列表</option>
          </select>
          <span className="absolute right-1.5 top-1.5 text-[6px] leading-2 pointer-events-none">▼</span>
        </div>
        <ul className="mt-[7px] h-[127px] border border-white">
          <li className="h-[17px] leading-4 pl-[21px] bg-[#5c8ac6] text-white">Box</li>
        </ul>
        <div className="mt-1.5 h-6 flex items-center">
          <button aria-label="锁定堆栈"><Icon className="w-5 h-4"><path d="M14 1l9 9-3 1-4 4v4l-5-5-9 9 7-11-4-3h4l4-5z" fill="#ddd" /></Icon></button>
          <span className="ml-2 w-px h-4 bg-black" />
          <button aria-label="显示最终结果" className="ml-[7px] w-[22px] h-[22px] rounded-sm bg-[#5c8ac6] flex justify-center items-center"><Icon className="w-[18px] h-[18px]"><path d="M6 2h12v3h-2v17H8V5H6z" fill="#dfe8ea" stroke="#333" /><path d="M12 6v15" stroke={T} strokeWidth="3" /></Icon></button>
          <span className="ml-[7px] w-px h-4 bg-black" />
          <button aria-label="使唯一" className="ml-2"><Icon className="w-[18px] h-[18px]"><path d="M9 6h9v6" stroke="#2c2c2c" /><circle cx="6" cy="6" r="4" fill="#5a5a5a" stroke="#2c2c2c" strokeWidth="1.5" /><circle cx="12" cy="16" r="5" fill="#555" stroke="#2c2c2c" strokeWidth="1.5" /><path d="M14 13h8v9h-8z" fill="#555" stroke="#2c2c2c" strokeWidth="1.5" /></Icon></button>
          <button aria-label="移除修改器" className="ml-2"><Icon className="w-4 h-4"><path d="M2 5h20M9 5V2h6v3M5 8v14h14V8M10 9v10M14 9v10" stroke="#262626" strokeWidth="1.8" /></Icon></button>
          <span className="ml-2.5 w-px h-4 bg-black" />
          <button aria-label="配置修改器集" className="ml-2"><Icon className="w-4 h-4"><path d="M1 2h20v20H1z" fill="#ddd" /><path d="M3 6h12M3 11h6v4H3zM12 11h6v4h-6zM3 17h6v3H3zM12 17h6v3h-6z" stroke="#222" strokeWidth="1.5" /><path d="M10 13l2-5 9-8 3 3-9 9z" fill={O} stroke="#333" /></Icon></button>
        </div>
        <div className="mt-2.5 h-3 flex items-center gap-1">
          <span className="flex-1 h-px bg-[#666]" />
          <span className="w-3.5 border-y border-dotted border-[#ddd] h-[3px]" />
          <span className="flex-1 h-px bg-[#666]" />
        </div>
        <div className="mt-0.5 h-[208px] w-[182px] bg-[#505050]">
          <button className="w-full h-[19px] flex items-center px-1.5 font-bold text-white text-[11px]">
            <span className="text-[6px] w-3.5 text-left text-[#bbb]">▼</span>参数
            <svg viewBox="0 0 7 5" className="ml-auto w-[7px] h-[5px]"><path d="M0 .5h7M0 2.5h7M0 4.5h7" stroke="#999" strokeDasharray="1 1" /></svg>
          </button>
          <div className="pt-1.5">
            <Param id="length" label="长度" value="90.0mm" />
            <Param id="width" label="宽度" value="90.0mm" />
            <Param id="height" label="高度" value="9.0mm" />
          </div>
          <div className="pt-[7px]">
            <Param id="length-segs" label="长度分段" value="1" />
            <Param id="width-segs" label="宽度分段" value="1" />
            <Param id="height-segs" label="高度分段" value="1" />
          </div>
          <div className="pt-[3px] pl-[18px]">
            {MAPPING.map((c) => (
              <label key={c.label} className="h-[22px] flex items-center gap-1 relative whitespace-nowrap">
                <input type="checkbox" defaultChecked={c.checked} className="appearance-none w-2.5 h-2.5 bg-[#666] peer" />
                <svg viewBox="0 0 10 10" className="absolute left-0 top-1.5 w-2.5 h-2.5 hidden peer-checked:block" fill="none"><path d="M1 5l3 3 5-7" stroke="#fff" strokeWidth="2" /></svg>
                {c.label}
              </label>
            ))}
          </div>
        </div>
      </div>
    </aside>
  );
}

/* ---------- Bottom bars ---------- */

const COORDS = [
  { axis: 'X', value: '-0.0mm' },
  { axis: 'Y', value: '0.0mm' },
  { axis: 'Z', value: '0.0mm' },
];

function StatusBar() {
  return (
    <footer className="h-[52px] bg-[#444] flex text-[11px] leading-4 text-[#e2e2e2]">
      <div className="w-[105px] shrink-0 border-r border-black pt-[3px]">
        <div className="w-[99px] h-[22px] bg-[#dbc5c5] border-2 border-[#eee] border-l-[#777] border-t-[#555]" />
        <input aria-label="MAXScript" defaultValue="欢迎使用 MAXScr" className="block w-[99px] h-6 pl-1 bg-white border-2 border-[#eee] border-t-[#555] border-l-[#777] text-black text-[11px] font-['Liberation_Mono','Noto_Sans_CJK_SC',monospace]" />
      </div>
      <div className="flex-1 pl-1 pt-2 flex flex-col gap-[9px]">
        <p>选择了 1 个 对象</p>
        <p>单击并拖动以选择并移动对象</p>
      </div>
      <div className="w-[896px] shrink-0 pt-1.5">
        <div className="h-5 flex items-center">
          <button aria-label="孤立当前选择" className="w-[26px] flex justify-center"><Icon className="w-4 h-4"><path d="M2 7V2h5M17 2h5v5M22 17v5h-5M7 22H2v-5" stroke={L} strokeWidth="1.5" /><path d="M8 8h8v8H8z" fill="#5bc0c0" /></Icon></button>
          <button aria-label="选择锁定切换" className="w-[27px] flex justify-center"><Icon className="w-4 h-4"><path d="M7 11V7c0-7 10-7 10 0v4" stroke={L} strokeWidth="2.5" /><path d="M4 11h16v11H4z" fill={L} /><path d="M12 14v5" stroke="#333" strokeWidth="2" /></Icon></button>
          <button aria-label="绝对模式变换输入" className="w-[27px] flex justify-center"><Icon className="w-4 h-4"><path d="M2 2h20v20H2z" stroke={L} strokeWidth="2" /><path d="M12 5l7 7-7 7-7-7z" stroke={L} strokeWidth="2.5" /><circle cx="12" cy="12" r="3" stroke={L} strokeWidth="2" /><path d="M12 2v5M12 17v5M2 12h5M17 12h5" stroke={L} strokeWidth="2" /></Icon></button>
          {COORDS.map((c) => (
            <label key={c.axis} className="flex items-center">
              <span className="w-4 text-right pr-0.5">{c.axis}:</span>
              <span className="relative w-[68px]">
                <input defaultValue={c.value} className={clsx(FIELD, 'block w-full h-[18px] pl-[3px]')} />
                <Spinner />
              </span>
            </label>
          ))}
          <span className="ml-1">栅格 = 10.0mm</span>
        </div>
        <div className="mt-1 h-[22px] flex items-center pl-[309px]">
          <button aria-label="时间标记" className="w-[21px] h-[21px] rounded-sm bg-[#5c8ac6] border-l border-black flex items-center justify-center">
            <Icon className="w-4 h-4"><path d="M12 2l9 5v10l-9 5-9-5V7zM3 7l9 5 9-5M12 12v10" stroke="#e8e8e8" strokeWidth="1.8" /></Icon>
          </button>
          <button className="pl-1.5 text-[#ccc]">添加时间标记</button>
        </div>
      </div>
    </footer>
  );
}

const APPS = [
  { name: 'Cortana', bar: '', icon: <circle cx="14" cy="14" r="7" stroke="#fff" strokeWidth="2.5" /> },
  { name: '任务视图', bar: '', icon: <path d="M6 9h10v10H6zM6 7V4M16 7V4M6 24v-3M16 24v-3M6 6h10M6 22h10M21 4v3M21 9v4M21 15v9" stroke="#eee" strokeWidth="1.5" /> },
  { name: 'Edge', bar: '', icon: <><circle cx="14" cy="14" r="12" fill="#1876c9" /><path d="M2 13C3 5 8 2 14 2c8 0 12 5 12 10 0 4-3 6-7 6-3 0-5-1-3-4 0-4-9-8-14-1z" fill="#35c18b" /><path d="M2 13c5-6 12-4 12 0-5 2-5 9 3 12-8 3-16-3-15-12z" fill="#1396d8" /><path d="M14 14c-2 3 0 9 9 7-2 3-4 4-6 4-7-1-9-9-3-11z" fill="#114a8b" /></> },
  { name: '文件资源管理器', bar: 'w-8', icon: <><path d="M3 4h8l2 3h12v17H3z" fill="#e9a92c" /><path d="M3 9h22v15H3z" fill="#fcd667" /><path d="M8 24v-8h12v8h-3v-4h-6v4z" fill="#3b90d4" /></> },
  { name: '截图工具', bar: '', icon: <><ellipse cx="13" cy="12" rx="11" ry="8" fill="#c9b8b5" transform="rotate(-15 13 12)" /><ellipse cx="14" cy="9" rx="11" ry="7" fill="#f6efee" stroke="#c8392f" strokeWidth="1.5" transform="rotate(-15 14 9)" /><path d="M14 6l6 14M21 9l-5 11" stroke="#7f97a6" strokeWidth="2" /><circle cx="15" cy="22" r="3" stroke="#3578a8" strokeWidth="2" /><circle cx="23" cy="21" r="3" stroke="#3578a8" strokeWidth="2" /></> },
  { name: 'Firefox', bar: '', icon: <><path d="M14 3c9 1 13 8 11 14-3 11-19 12-22 0-1-5 1-9 3-11l2 3c2-1 3-4 6-6z" fill="#ff5b2f" /><path d="M14 3c1 5 8 7 8 13 0 5-4 8-8 8 8 2 13-6 11-12-1-4-5-8-11-9z" fill="#ffcb2e" /><circle cx="14" cy="16" r="5" fill="#9a4ad0" /><path d="M6 13c3-3 6-1 9 1-3 0-3 2-6 2z" fill="#ff9a2e" /></> },
  { name: '设计软件', bar: 'w-10', icon: <><path d="M3 3h22v22H3z" fill="#f4f6f8" stroke="#3f5e9e" strokeWidth="2.5" /><path d="M5 18C11 18 12 5 21 5" stroke="#4273b8" strokeWidth="2" /><path d="M8 23c9-2 7-9 15-14" stroke="#e8912b" strokeWidth="3" /></> },
  { name: '画图', bar: 'w-10', icon: <><ellipse cx="12" cy="16" rx="10" ry="9" fill="#b9dcf0" stroke="#7ba4bd" /><circle cx="8" cy="13" r="2" fill="#d33" /><circle cx="14" cy="11" r="2" fill="#e9b321" /><circle cx="7" cy="19" r="2" fill="#3a3" /><circle cx="13" cy="21" r="2" fill="#36c" /><path d="M23 7L15 23" stroke="#c88a3a" strokeWidth="3" /><path d="M22 3l4 3-3 4-2-2z" fill="#9a6b3a" /></> },
  { name: '优酷', bar: 'w-10', icon: <><rect x="2" y="2" width="23" height="23" rx="4" fill="#fff" /><path d="M10 4l8 6-3 3-7-6z" fill="#e82b6a" stroke="#e82b6a" strokeWidth="2" /><path d="M8 16l9-4 2 3-8 4z" fill="#e82b6a" /><rect x="14" y="15" width="13" height="12" rx="3" fill="#3f9bd6" stroke="#d6ecfa" /><path d="M18 18v6M22 18v6" stroke="#fff" strokeWidth="2" /></> },
  { name: '3ds Max', bar: 'w-full', icon: <><path d="M2 2h24v24H2z" fill="#e3eeee" /><path d="M9 6c6-2 10 0 9 3 0 2-2 3-5 3 4 0 6 2 6 4 0 4-5 5-10 4" stroke="#158f93" strokeWidth="3.5" /><path d="M16 23.5h8" stroke="#158f93" strokeWidth="2" strokeDasharray="2 1" /></> },
];

function Taskbar() {
  return (
    <div className="h-[41px] flex bg-linear-to-r from-[#1f2a29] via-[#313221] to-[#3d3f29]">
      <button aria-label="开始" className="w-12 flex items-center justify-center">
        <svg viewBox="0 0 18 18" className="w-[17px] h-[17px]"><path d="M0 3l8-1v7H0zM9 2l9-2v9H9zM0 10h8v7l-8-1zM9 10h9v8l-9-1z" fill="#fff" /></svg>
      </button>
      <label className="w-[344px] pb-0.5 bg-[#f2f2f2] flex items-center pl-3">
        <svg viewBox="0 0 18 18" className="w-[17px] h-[17px]" fill="none"><circle cx="11" cy="7" r="5.5" stroke="#222" strokeWidth="1.3" /><path d="M7 11l-6 6" stroke="#222" strokeWidth="1.5" /></svg>
        <input aria-label="搜索" placeholder="在这里输入你要搜索的内容" className="ml-[11px] flex-1 text-sm outline-none placeholder:text-[#333]" />
      </label>
      {APPS.map((a) => (
        <button key={a.name} aria-label={a.name} className={clsx('w-[49px] pb-0.5 relative flex items-center justify-center', a.bar === 'w-full' && 'bg-[#5f614d]')}>
          <svg viewBox="0 0 28 28" className="w-[26px] h-[26px]" fill="none">{a.icon}</svg>
          {a.bar && <span className={clsx('absolute bottom-0 h-0.5 bg-[#76b9ed]', a.bar)} />}
        </button>
      ))}
    </div>
  );
}

function Watermark() {
  return (
    <div className="absolute right-0 bottom-0 w-[475px] h-[238px] bg-white flex items-center pl-[43px] text-black">
      <svg viewBox="0 0 126 104" className="w-[126px] h-[104px] shrink-0" fill="none">
        <defs>
          <linearGradient id="tower" x1="0" x2="1" y1="0" y2="1">
            <stop offset="0.3" stopColor="#123c96" />
            <stop offset="1" stopColor="#4f8fd0" />
          </linearGradient>
        </defs>
        <path d="M8 44C28 12 66-4 98 1c26 5 30 26 23 43h-4c5-18-1-32-22-35C66 5 32 18 8 44z" fill="#8fbf21" />
        <path d="M3 54C-6 82 14 103 46 102c36-2 69-29 78-60-18 32-46 47-78 48C16 90 1 76 3 54z" fill="#123c96" />
        <path d="M8 61l20-10v28C17 76 10 71 8 61z" fill="#123c96" />
        <path d="M38 26l23-11v68H38z" fill="url(#tower)" />
        <path d="M65 18l20 10v14l-12 5v34l-8 2z" fill="#dedfe1" />
        <path d="M30 54l5-3v30l-5-1zM96 43l17 8c-4 8-9 14-17 19z" fill="#dedfe1" />
        <path d="M74 47l19-9v35l-19 6z" fill="#123c96" />
      </svg>
      <div className="mt-1 -ml-px whitespace-nowrap font-['Noto_Sans','Noto_Sans_CJK_SC',sans-serif]">
        <p className="text-[52px] leading-[44px] font-black italic">土木工程网</p>
        <p className="text-[35px] leading-8 font-medium italic">www.civilcn.com</p>
      </div>
    </div>
  );
}

export default function App() {
  return (
    <div className="relative h-screen overflow-hidden flex flex-col bg-[#444] font-['Noto_Sans','Noto_Sans_CJK_SC',sans-serif]">
      <Header />
      <Toolbar />
      <Ribbon />
      <div className="flex-1 min-h-0 flex border-t border-black">
        <div className="w-10 shrink-0 bg-[#333] flex flex-col items-end">
          <div className="w-full h-2.5 bg-[#3c3c3c] border-b border-black" />
          <button aria-label="展开" className="mt-auto mr-2.5 w-5 h-5 rounded-xs bg-[#555] text-[9px] leading-5 text-[#e6e6e6]">▶</button>
          <button aria-label="视口布局" className="mt-2.5 w-9 h-[45px] rounded-sm bg-linear-to-b from-[#4c5f7c] to-[#4684dc] flex items-center justify-center">
            <span className="grid grid-cols-2 gap-px bg-[#1d2a3a] p-px">
              {[0, 1, 2, 3].map((i) => <i key={i} className="w-3.5 h-[13px] bg-[#5c6b80]" />)}
            </span>
          </button>
        </div>
        <SceneExplorer />
        <Workspace />
        <CommandPanel />
      </div>
      <StatusBar />
      <Taskbar />
      <Watermark />
    </div>
  );
}
